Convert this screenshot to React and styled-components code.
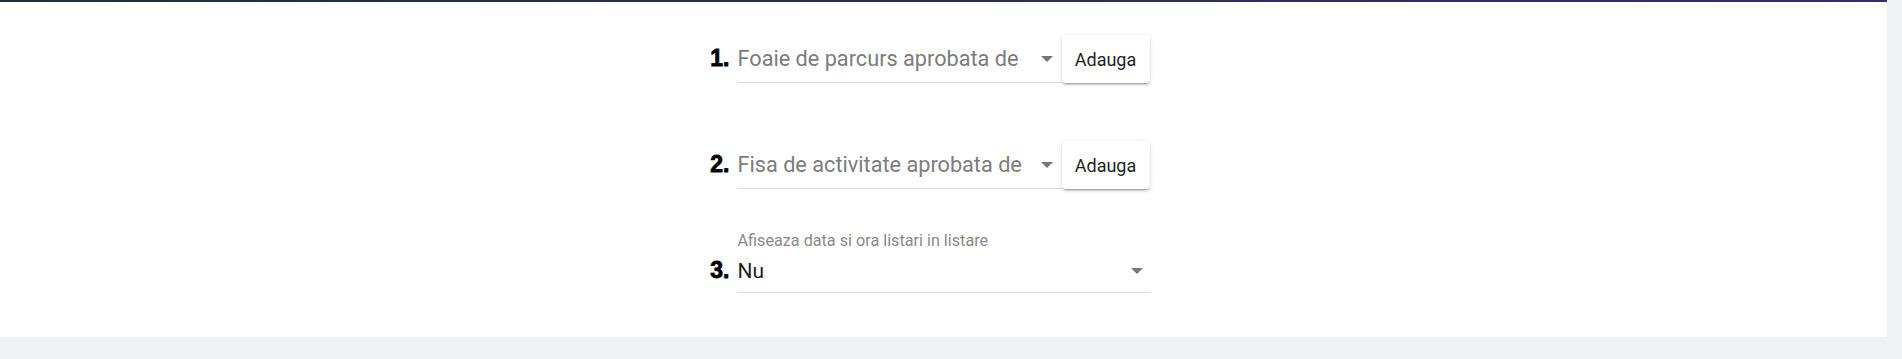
import React from 'react';
import styled, { createGlobalStyle } from 'styled-components';

const GlobalStyle = createGlobalStyle`
  html, body {
    margin: 0;
    padding: 0;
    background: #eff2f5;
    font-family: Roboto, "Liberation Sans", Arial, sans-serif;
  }
`;

const Page = styled.div`
  width: 100%;
  height: 359px;
  background: #eff2f5;
`;

const Card = styled.div`
  width: calc(100% - 15px);
  height: 337px;
  background: #ffffff;
  box-sizing: border-box;
`;

const TopBar = styled.div`
  height: 2px;
  background: linear-gradient(90deg, #1b3140 0%, #2a2f55 50%, #382c6c 100%);
`;

const Form = styled.div`
  width: 412px;
  margin: 0 auto;
  padding-top: 33px;
  display: flex;
  flex-direction: column;
`;

const Row = styled.div`
  display: flex;
  align-items: flex-end;
  margin-top: ${(p) => p.$gap || 0}px;
`;

const Group = styled.div`
  display: flex;
  flex-direction: column;
  margin-top: ${(p) => p.$gap || 0}px;
`;

const Label = styled.div`
  font-size: 16.2px;
  line-height: 18px;
  color: #8a8a8a;
  margin-bottom: 9px;
  white-space: nowrap;
`;

const Select = styled.div`
  flex: 1;
  display: flex;
  align-items: baseline;
  padding: ${(p) => (p.$compact ? '0 7px 9px 0' : '12px 9px 11px 0')};
  border-bottom: 1px solid #d9d9d9;
  cursor: pointer;
`;

const Num = styled.span`
  width: 41px;
  margin-left: -41px;
  padding-right: 8px;
  box-sizing: border-box;
  text-align: right;
  font-family: "Liberation Sans", Arial, sans-serif;
  font-weight: 900;
  font-size: 23px;
  line-height: 20px;
  color: #000;
  -webkit-text-stroke: 0.8px #000;
  white-space: nowrap;
`;

const Value = styled.span`
  flex: 1;
  font-size: ${(p) => (p.$placeholder ? '21.7px' : '21px')};
  line-height: 24px;
  color: ${(p) => (p.$placeholder ? '#7c7c7c' : '#222222')};
  white-space: nowrap;
  overflow: hidden;
`;

const Arrow = styled.svg`
  align-self: center;
  width: 12px;
  height: 6px;
  flex-shrink: 0;
  fill: #767676;
`;

const AddButton = styled.button`
  width: 88px;
  height: 48px;
  flex-shrink: 0;
  border: none;
  border-radius: 4px;
  background: #ffffff;
  color: #1f1f1f;
  font-family: Roboto, "Liberation Sans", Arial, sans-serif;
  font-size: 18px;
  font-weight: 400;
  padding: 0;
  cursor: pointer;
  box-shadow: 0 3px 1px -2px rgba(0, 0, 0, 0.2), 0 2px 2px 0 rgba(0, 0, 0, 0.14),
    0 1px 5px 0 rgba(0, 0, 0, 0.12);
`;

const DropArrow = () => (
  <Arrow viewBox="0 0 12 6">
    <polygon points="0,0 12,0 6,6" />
  </Arrow>
);

export default function App() {
  return (
    <>
      <GlobalStyle />
      <Page>
        <Card>
          <TopBar />
          <Form>
            <Row>
              <Select>
                <Num>1.</Num>
                <Value $placeholder>Foaie de parcurs aprobata de</Value>
                <DropArrow />
              </Select>
              <AddButton>Adauga</AddButton>
            </Row>
            <Row $gap={58}>
              <Select>
                <Num>2.</Num>
                <Value $placeholder>Fisa de activitate aprobata de</Value>
                <DropArrow />
              </Select>
              <AddButton>Adauga</AddButton>
            </Row>
            <Group $gap={43}>
              <Label>Afiseaza data si ora listari in listare</Label>
              <Select $compact>
                <Num>3.</Num>
                <Value>Nu</Value>
                <DropArrow />
              </Select>
            </Group>
          </Form>
        </Card>
      </Page>
    </>
  );
}
